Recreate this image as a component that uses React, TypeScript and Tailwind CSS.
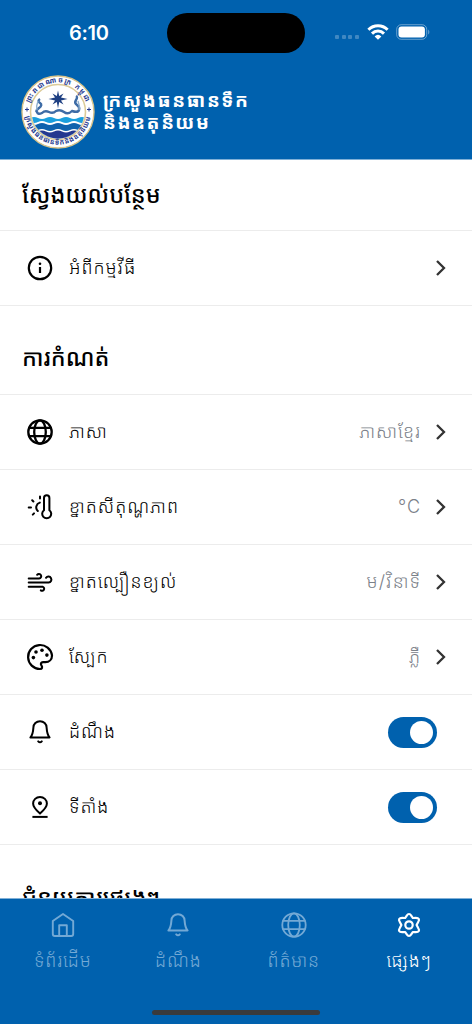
import type { ReactNode } from "react"

function Icon({ children, width = 2.2 }: { children: ReactNode; width?: number }) {
    return (
        <svg viewBox="-16 -16 32 32" className="w-8 h-8 shrink-0" fill="none" stroke="currentColor" strokeWidth={width} strokeLinecap="round" strokeLinejoin="round">
            {children}
        </svg>
    )
}

const InfoIcon = () => (
    <Icon>
        <circle r="11.2" />
        <path d="M0 -1V5" strokeLinecap="butt" strokeWidth="2.2" />
        <circle cy="-4.3" r="1.3" fill="currentColor" stroke="none" />
    </Icon>
)

const GlobeIcon = ({ width = 2.3 }: { width?: number }) => (
    <Icon width={width}>
        <circle r="11.7" />
        <ellipse rx="5.8" ry="11.7" />
        <path d="M-10.8 -4.2H10.8M-10.8 4.2H10.8" />
    </Icon>
)

const ThermoIcon = () => (
    <Icon width={2}>
        <path d="M4 3.2V-9a2.7 2.7 0 0 1 5.4 0V3.2a4.5 4.5 0 1 1-5.4 0z" />
        <path d="M-0.2 -4.4A5 5 0 0 0 -2.2 4" />
        <path d="M-11.3 0.6H-9M-7.8 -6.7L-6.6 -5.5M0 -10.4V-8.6M-7.2 7.6L-6 6.4" />
    </Icon>
)

const WindIcon = () => (
    <Icon width={2}>
        <path d="M-11.3 -3.5H-0.9A2.3 2.3 0 1 0 -2.9 -7.2" />
        <path d="M-11.3 0.6H8.6A3 3 0 1 0 6 -4.2" />
        <path d="M-11.3 4.8H2.9A2.1 2.1 0 1 1 0.8 8.4" />
    </Icon>
)

const PaletteIcon = () => (
    <Icon width={2.2}>
        <path d="M0 12A12 12 0 1 1 12 -1.6C12 2.5 9.2 5.2 5.4 5.2H3C1 5.2 .3 6.8 1.4 8.4C2.6 10.1 2.3 12 0 12z" />
        <g fill="currentColor" stroke="none">
            <circle cx="-6.6" cy="0.6" r="1.8" />
            <circle cx="-4" cy="-5" r="1.8" />
            <circle cx="2" cy="-6.7" r="1.8" />
            <circle cx="6.9" cy="-1.9" r="1.8" />
        </g>
    </Icon>
)

const BellIcon = ({ width = 2 }: { width?: number }) => (
    <Icon width={width}>
        <path d="M-9.6 5.4C-7.6 3.6 -6.9 -0.4 -6.6 -4.4A6.6 6.4 0 0 1 6.6 -4.4C6.9 -0.4 7.6 3.6 9.6 5.4z" />
        <path d="M-1.8 9.4Q0 11.2 1.8 9.4" />
    </Icon>
)

const PinIcon = () => (
    <Icon width={2}>
        <path d="M0 6.6C-4.4 2.8 -6.9 -0.3 -6.9 -3.4A6.9 6.7 0 0 1 6.9 -3.4C6.9 -0.3 4.4 2.8 0 6.6z" />
        <circle cy="-3.7" r="2" fill="currentColor" stroke="none" />
        <path d="M-7.6 9.9H7.6" strokeLinecap="butt" />
    </Icon>
)

const HomeIcon = () => (
    <Icon width={1.9}>
        <path d="M-10.2 -4L0 -11L10.2 -4V9A2 2 0 0 1 8.2 11H-8.2A2 2 0 0 1 -10.2 9z" />
        <path d="M-3.8 11V0.2H3.8V11" />
    </Icon>
)

const GearIcon = () => (
    <Icon width={2.2}>
        <circle r="3.7" />
        <path d="M-2.4 -9.2Q0 -12.8 2.4 -9.2L3.8 -7L6.8 -7.2Q11.6 -7 9.2 -3L7.6 0L9.2 3Q11.6 7 6.8 7.2L3.8 7L2.4 9.2Q0 12.8 -2.4 9.2L-3.8 7L-6.8 7.2Q-11.6 7 -9.2 3L-7.6 0L-9.2 -3Q-11.6 -7 -6.8 -7.2L-3.8 -7z" />
    </Icon>
)

const Chevron = () => (
    <svg viewBox="0 0 12 18" className="w-3 h-[18px] ml-[15px] text-[#333333]" fill="none" stroke="currentColor" strokeWidth="2.3">
        <path d="M2 2L9 9L2 16" />
    </svg>
)

const Toggle = () => (
    <div className="w-[49px] h-[31px] mr-[10px] rounded-full bg-[#0061ae] flex items-center justify-end pr-1">
        <div className="w-[23px] h-[23px] rounded-full bg-white" />
    </div>
)

function Emblem() {
    return (
        <svg viewBox="-37 -37 74 74" className="w-[74px] h-[74px] shrink-0">
            <defs>
                <path id="ring-top" d="M-29.5 0A29.5 29.5 0 0 1 29.5 0" />
                <path id="ring-bottom" d="M-32.5 -6A33 33 0 1 0 32.5 -6" />
                <clipPath id="sea"><circle r="26.5" /></clipPath>
            </defs>
            <circle r="36" fill="#fff" stroke="#d9c48a" strokeWidth="1.4" />
            <circle r="27.5" fill="#fff" stroke="#dccb98" strokeWidth="1.6" />
            <g clipPath="url(#sea)">
                <path d="M-28 6q4 -2 8 0t8 0t8 0t8 0t8 0t8 0t8 0V30H-28z" fill="#1b9fdd" />
                <path d="M-28 10q4 2 8 0t8 0t8 0t8 0t8 0t8 0t8 0V30H-28z" fill="#fff" />
                <path d="M-28 12q4 2 8 0t8 0t8 0t8 0t8 0t8 0t8 0V30H-28z" fill="#0f62ad" />
                <path d="M-28 18q4 2 8 0t8 0t8 0t8 0t8 0t8 0t8 0V30H-28z" fill="#fff" />
                <path d="M-28 19.5q4 2 8 0t8 0t8 0t8 0t8 0t8 0t8 0V30H-28z" fill="#24388f" />
            </g>
            <path d="M-18 -13q-3 2 0 4t-1 5t-2 4q1 3 5 1q3 -3 7 -1t7 -1q4 -2 8 1t8 -1q6 2 7 -1t-2 -5t-1 -5t0 -4" fill="none" stroke="#3e6ca6" strokeWidth="2.4" />
            <path d="M-20 -11q-2 5 -1 9M20 -11q2 5 1 9" fill="none" stroke="#8fb0cf" strokeWidth="1.4" />
            <path d="M0 -21.5L1.2 -16L5.5 -18.5L3 -14.4L9.5 -13L3 -11.6L5.5 -7.5L1.2 -10L0 -3.5L-1.2 -10L-5.5 -7.5L-3 -11.6L-9.5 -13L-3 -14.4L-5.5 -18.5L-1.2 -16z" fill="#1d3f82" />
            <path d="M-33 -2.5h4M-31 -4.5v4M29 -2.5h4M31 -4.5v4" stroke="#24388f" strokeWidth="1" />
            <g fill="#24388f" fontSize="7" fontWeight="700">
                <text textAnchor="middle" letterSpacing="1.3"><textPath href="#ring-top" startOffset="50%">ព្រះរាជាណាចក្រ កម្ពុជា</textPath></text>
                <text textAnchor="middle" letterSpacing="0.6"><textPath href="#ring-bottom" startOffset="50%">ក្រសួងធនធានទឹកនិងឧតុនិយម</textPath></text>
            </g>
        </svg>
    )
}

const settings = [
    { label: "ភាសា", value: "ភាសាខ្មែរ", icon: <GlobeIcon /> },
    { label: "ខ្នាតសីតុណ្ហភាព", value: "°C", icon: <ThermoIcon /> },
    { label: "ខ្នាតល្បឿនខ្យល់", value: "ម/វិនាទី", icon: <WindIcon /> },
    { label: "ស្បែក", value: "ភ្លឺ", icon: <PaletteIcon /> },
    { label: "ដំណឹង", toggle: true, icon: <BellIcon /> },
    { label: "ទីតាំង", toggle: true, icon: <PinIcon /> },
]

const tabs = [
    { label: "ទំព័រដើម", icon: <HomeIcon /> },
    { label: "ដំណឹង", icon: <BellIcon width={2} /> },
    { label: "ព័ត៌មាន", icon: <GlobeIcon width={1.8} /> },
    { label: "ផ្សេងៗ", icon: <GearIcon />, active: true },
]

function Row({ icon, label, value, toggle }: { icon: ReactNode; label: string; value?: string; toggle?: boolean }) {
    return (
        <div className="h-[75px] shrink-0 flex items-center pl-6 pr-[25px] border-b border-[#ececec]">
            {icon}
            <span className="ml-[13px] flex-1 text-[18px] leading-8 font-light tracking-[1px] whitespace-nowrap">{label}</span>
            {value && <span className="-mr-px text-[18px] leading-8 font-light tracking-[1px] text-[#7b8189]">{value}</span>}
            {toggle ? <Toggle /> : <Chevron />}
        </div>
    )
}

export default function App() {
    return (
        <div className="w-[472px] h-[1024px] overflow-hidden bg-white text-black flex flex-col font-['Inter','Noto_Sans_Khmer','Khmer_OS','Noto_Sans',sans-serif]">
            <header className="h-[160px] shrink-0 bg-[#0061ae] border-b border-[#80b0d7] text-white">
                {/* Status bar */}
                <div className="h-[65px] flex items-center">
                    <div className="w-[167px] pl-[69px] text-[20px] font-semibold tracking-[-0.3px]">6:10</div>
                    <div className="w-[138px] h-[40px] rounded-full bg-black" />
                    <div className="ml-[30px] mt-2 flex gap-[2.6px]">
                        {[0, 1, 2, 3].map((i) => <div key={i} className="w-1 h-1 rounded-[1px] bg-white/25" />)}
                    </div>
                    <svg viewBox="0 0 22 16" className="w-[22px] h-4 ml-2 -mt-0.5" fill="none" stroke="#fff" strokeWidth="3">
                        <path d="M1.4 5.8A13.6 13.6 0 0 1 20.6 5.8M5 9.6A8.5 8.5 0 0 1 17 9.6" />
                        <path d="M11 15.8L7.6 12.4A5 5 0 0 1 14.4 12.4z" fill="#fff" stroke="none" />
                    </svg>
                    <svg viewBox="0 0 35 16" className="w-[35px] h-4 ml-[7px] -mt-0.5">
                        <rect x="0.7" y="0.7" width="30" height="14.6" rx="4.6" fill="none" stroke="#fff" strokeOpacity="0.4" />
                        <rect x="2.5" y="2.5" width="26.4" height="11" rx="3" fill="#fff" />
                        <path d="M32.3 5.4q2 2.6 0 5.2z" fill="#fff" fillOpacity="0.5" />
                    </svg>
                </div>
                <div className="flex items-center pl-[21px] pt-[10px]">
                    <Emblem />
                    <div className="ml-2 text-[19px] leading-[22px] font-bold tracking-[1.6px] whitespace-nowrap">
                        <p>ក្រសួងធនធានទឹក</p>
                        <p>និងឧតុនិយម</p>
                    </div>
                </div>
            </header>

            <main className="flex-1 min-h-0 overflow-hidden flex flex-col">
                <h2 className="h-[71px] shrink-0 pl-[22px] flex items-center border-b border-[#ececec] text-[23px] font-medium">ស្វែងយល់បន្ថែម</h2>
                <Row icon={<InfoIcon />} label="អំពីកម្មវីធី" />
                <h2 className="h-[89px] shrink-0 pl-[22px] pt-4 flex items-center border-b border-[#ececec] text-[23px] font-medium">ការកំណត់</h2>
                {settings.map((item) => <Row key={item.label} {...item} />)}
                <h2 className="h-[90px] shrink-0 pl-[22px] pt-4 flex items-center text-[23px] font-medium">ជំនួយការផ្សេងៗ</h2>
            </main>

            <nav className="h-[126px] shrink-0 bg-[#0061ae] border-t border-[#80b0d7] flex flex-col items-center text-white">
                <div className="w-full h-[111px] flex px-[5px] pt-[10px]">
                    {tabs.map((tab) => (
                        <div key={tab.label} className={tab.active ? "flex-1 flex flex-col items-center" : "flex-1 flex flex-col items-center text-[#73a9d5]"}>
                            {tab.icon}
                            <span className="mt-1 text-[18px] leading-8 font-light tracking-[0.8px]">{tab.label}</span>
                        </div>
                    ))}
                </div>
                <div className="w-[168px] h-[5px] rounded-full bg-[#3a3a3c]" />
            </nav>
        </div>
    )
}
